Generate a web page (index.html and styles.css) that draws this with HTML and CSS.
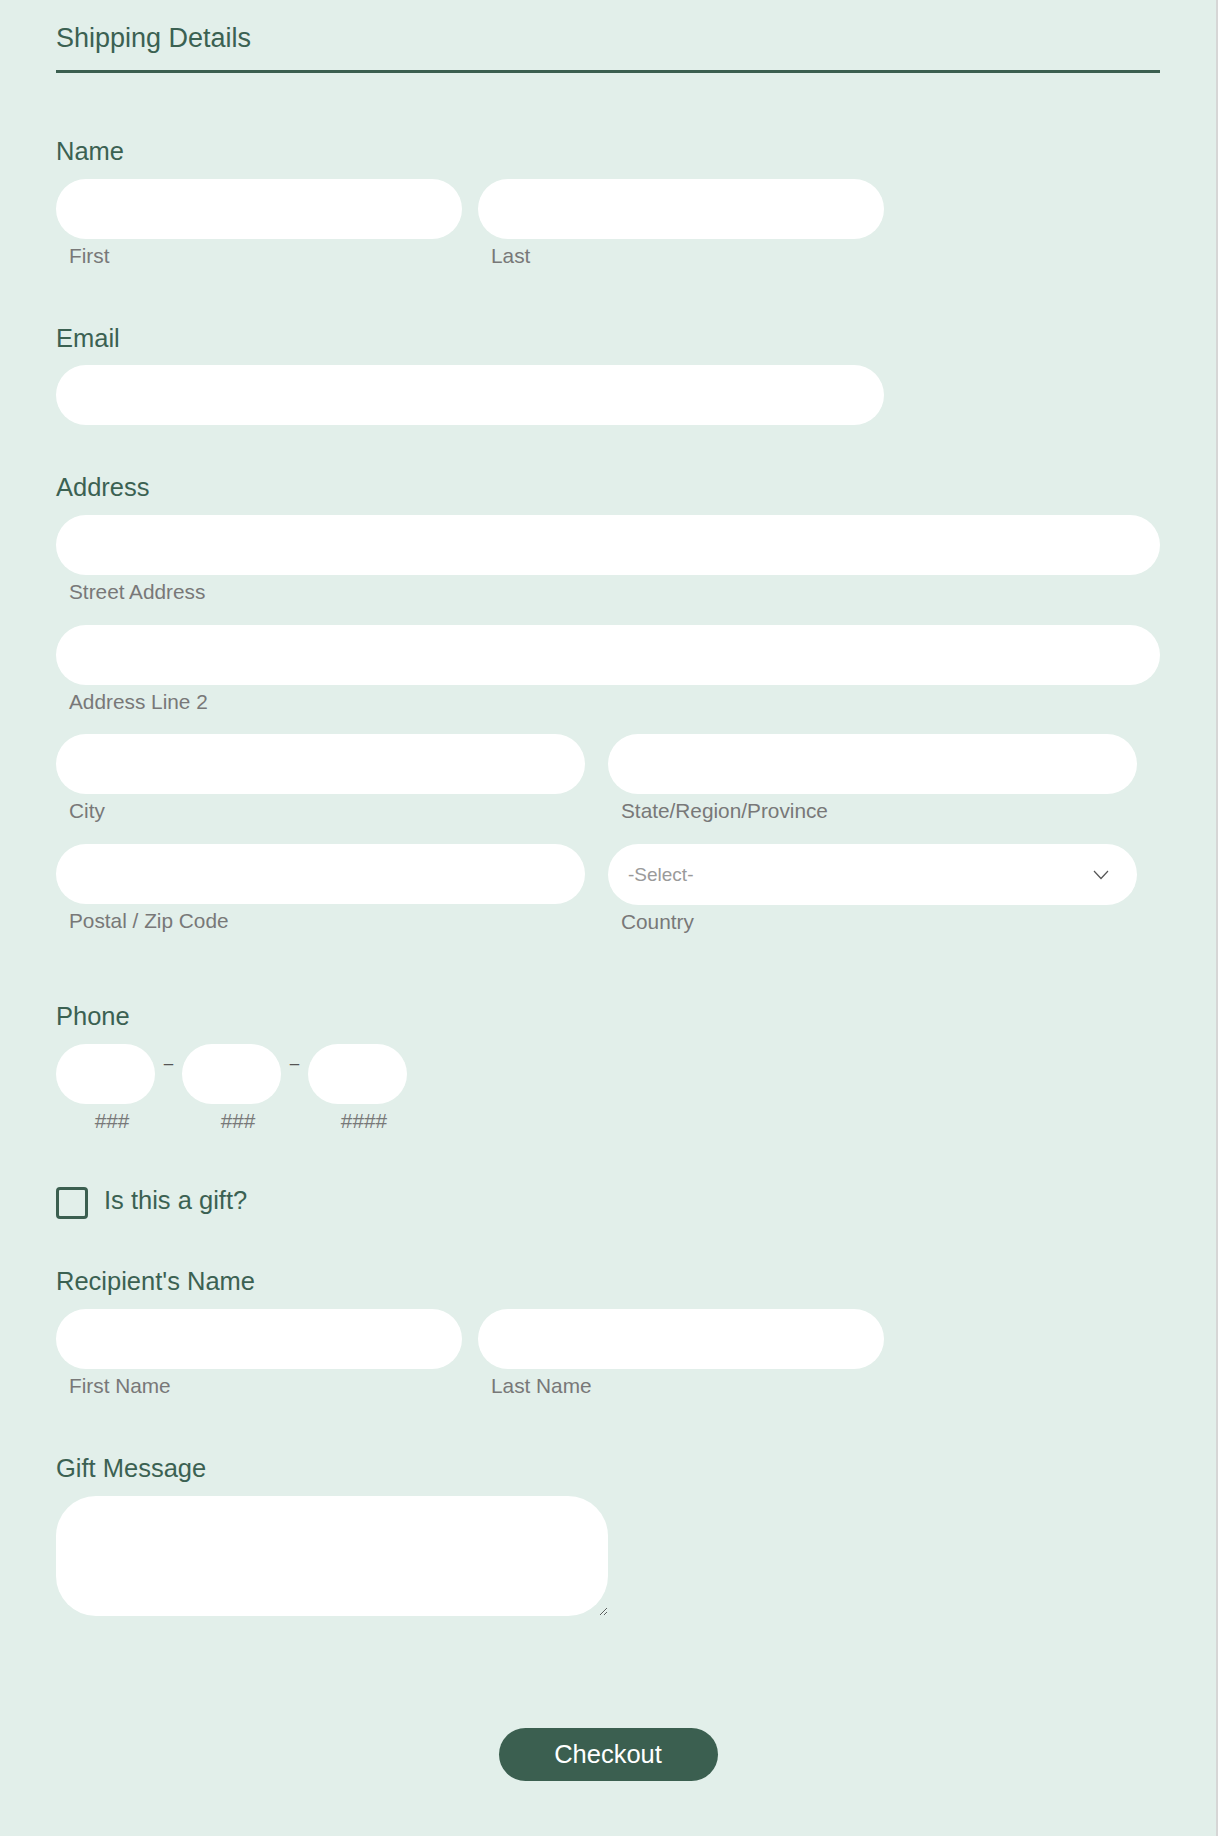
FILE: index.html
```html
<!DOCTYPE html>
<html lang="en">
<head>
<meta charset="utf-8">
<title>Shipping Details</title>
<link rel="stylesheet" href="styles.css">
</head>
<body>
<div class="page">
  <form class="form">
    <div class="header">
      <h1 class="heading">Shipping Details</h1>
    </div>

    <div class="field f-name">
      <label class="label">Name</label>
      <div class="pair">
        <div class="sub"><input class="input" type="text"><span class="sublabel">First</span></div>
        <div class="sub"><input class="input" type="text"><span class="sublabel">Last</span></div>
      </div>
    </div>

    <div class="field f-email">
      <label class="label label-tight">Email</label>
      <div class="email-wrap"><input class="input" type="email"></div>
    </div>

    <div class="field f-address">
      <label class="label">Address</label>
      <div class="addr-row"><input class="input" type="text"><span class="sublabel">Street Address</span></div>
      <div class="addr-row"><input class="input" type="text"><span class="sublabel">Address Line 2</span></div>
      <div class="addr-row addr-grid">
        <div class="sub"><input class="input" type="text"><span class="sublabel">City</span></div>
        <div class="sub"><input class="input" type="text"><span class="sublabel">State/Region/Province</span></div>
      </div>
      <div class="addr-row addr-grid">
        <div class="sub"><input class="input" type="text"><span class="sublabel">Postal / Zip Code</span></div>
        <div class="sub">
          <div class="select-wrap">
            <select class="select">
              <option>-Select-</option>
            </select>
            <svg class="chevron" width="16" height="10" viewBox="0 0 16 10"><polyline points="1,1 8,8.5 15,1" fill="none" stroke="#555" stroke-width="1.2"/></svg>
          </div>
          <span class="sublabel">Country</span>
        </div>
      </div>
    </div>

    <div class="field f-phone">
      <label class="label">Phone</label>
      <div class="phone">
        <div class="ph"><input class="input" type="tel"><span class="sublabel center">###</span></div>
        <span class="sep">&ndash;</span>
        <div class="ph"><input class="input" type="tel"><span class="sublabel center">###</span></div>
        <span class="sep">&ndash;</span>
        <div class="ph"><input class="input" type="tel"><span class="sublabel center">####</span></div>
      </div>
    </div>

    <div class="field f-gift">
      <label class="check-row">
        <input class="checkbox" type="checkbox">
        <span class="check-text">Is this a gift?</span>
      </label>
    </div>

    <div class="field f-recipient">
      <label class="label">Recipient's Name</label>
      <div class="pair">
        <div class="sub"><input class="input" type="text"><span class="sublabel">First Name</span></div>
        <div class="sub"><input class="input" type="text"><span class="sublabel">Last Name</span></div>
      </div>
    </div>

    <div class="field f-message">
      <label class="label">Gift Message</label>
      <textarea class="textarea"></textarea>
    </div>

    <div class="actions">
      <button class="button" type="button">Checkout</button>
    </div>
  </form>
</div>
</body>
</html>
```

FILE: styles.css
```css
* {
  box-sizing: border-box;
}

html,
body {
  margin: 0;
  padding: 0;
  background: #e2efea;
}

body {
  font-family: "Liberation Sans", Arial, sans-serif;
}

.page {
  width: 1218px;
  min-height: 1836px;
  border-right: 2px solid #d6d6d6;
  padding: 22px 0 0 56px;
}

.form {
  width: 1104px;
}

.header {
  border-bottom: 3px solid #3b5f50;
  padding-bottom: 16px;
}

.heading {
  margin: 0;
  font-size: 27px;
  line-height: 32px;
  font-weight: normal;
  color: #3b6152;
}

.label {
  display: block;
  font-size: 25.5px;
  line-height: 30px;
  color: #3b6152;
  margin-bottom: 13px;
}

.label-tight {
  margin-bottom: 12px;
}

.input {
  display: block;
  width: 100%;
  height: 60px;
  border: 0;
  border-radius: 30px;
  background: #fff;
  padding: 0 20px;
  font-family: inherit;
  font-size: 20px;
  outline: none;
}

.sublabel {
  display: block;
  margin-top: 5px;
  padding-left: 13px;
  font-size: 20.8px;
  line-height: 24px;
  color: #787878;
}

.sublabel.center {
  text-align: center;
}

.f-name { margin-top: 63px; }
.f-email { margin-top: 55px; }
.f-address { margin-top: 47px; }
.f-phone { margin-top: 67px; }
.f-gift { margin-top: 52px; }
.f-recipient { margin-top: 47px; }
.f-message { margin-top: 55px; }

.pair {
  display: grid;
  grid-template-columns: 406px 406px;
  column-gap: 16px;
}

.email-wrap {
  width: 828px;
}

.addr-row + .addr-row {
  margin-top: 20.67px;
}

.addr-grid {
  display: grid;
  grid-template-columns: 529px 529px;
  column-gap: 23px;
}

.select-wrap {
  position: relative;
}

.select {
  display: block;
  width: 100%;
  height: 61px;
  border: 0;
  border-radius: 30.5px;
  background: #fff;
  padding: 0 50px 0 20px;
  font-family: inherit;
  font-size: 19px;
  color: #9a9a9a;
  appearance: none;
  -webkit-appearance: none;
  outline: none;
}

.chevron {
  position: absolute;
  right: 28px;
  top: 26px;
  pointer-events: none;
}

.phone {
  display: flex;
  align-items: flex-start;
}

.ph {
  width: 99px;
}

.sep {
  width: 27px;
  text-align: center;
  font-size: 17px;
  line-height: 20px;
  margin-top: 10px;
  color: #555;
}

.check-row {
  display: flex;
  align-items: flex-start;
}

.checkbox {
  appearance: none;
  -webkit-appearance: none;
  width: 32px;
  height: 32px;
  margin: 2px 16px 0 0;
  border: 3px solid #3b5f50;
  border-radius: 4px;
  background: transparent;
}

.check-text {
  font-size: 25.5px;
  line-height: 30px;
  color: #3b6152;
}

.textarea {
  display: block;
  width: 552px;
  height: 120px;
  border: 0;
  border-radius: 40px;
  background: #fff;
  padding: 16px 24px;
  font-family: inherit;
  font-size: 20px;
  outline: none;
}

.actions {
  margin-top: 112px;
  display: flex;
  justify-content: center;
}

.button {
  width: 219px;
  height: 53px;
  border: 0;
  border-radius: 27px;
  background: #3b5f50;
  color: #fff;
  font-family: inherit;
  font-size: 25.5px;
  cursor: pointer;
}
```
